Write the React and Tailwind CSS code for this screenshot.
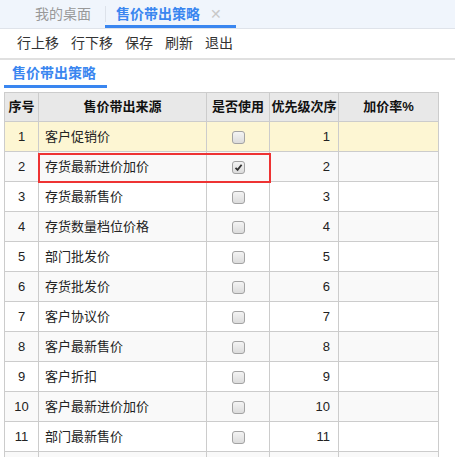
import React from 'react';

const rows = [
  { no: 1, name: '客户促销价', checked: false, order: 1 },
  { no: 2, name: '存货最新进价加价', checked: true, order: 2 },
  { no: 3, name: '存货最新售价', checked: false, order: 3 },
  { no: 4, name: '存货数量档位价格', checked: false, order: 4 },
  { no: 5, name: '部门批发价', checked: false, order: 5 },
  { no: 6, name: '存货批发价', checked: false, order: 6 },
  { no: 7, name: '客户协议价', checked: false, order: 7 },
  { no: 8, name: '客户最新售价', checked: false, order: 8 },
  { no: 9, name: '客户折扣', checked: false, order: 9 },
  { no: 10, name: '客户最新进价加价', checked: false, order: 10 },
  { no: 11, name: '部门最新售价', checked: false, order: 11 },
];

const CheckBox = ({ checked }) => (
  <span className="inline-flex items-center justify-center w-[13px] h-[13px] rounded-[3px] border border-[#a3a3a3] bg-gradient-to-b from-[#f4f4f4] to-[#dcdcdc] align-middle">
    {checked && (
      <svg width="9" height="9" viewBox="0 0 9 9">
        <path d="M1.5 4.8 L3.6 6.8 L7.6 1.8" fill="none" stroke="#333" strokeWidth="1.8" />
      </svg>
    )}
  </span>
);

const App = () => {
  return (
    <div className="w-[455px] h-[457px] overflow-hidden bg-white text-[#333]" style={{ fontFamily: '"Liberation Sans", "Noto Sans CJK SC", sans-serif' }}>
      {/* top tabs */}
      <div className="h-[29px] bg-[#f0f5fc] border-b border-[#dfe3ea] flex items-stretch">
        <div className="w-[105px] flex items-center pl-[35px] text-[14px] text-[#999]">我的桌面</div>
        <div className="relative flex items-center pl-[11px] pr-[14px] gap-[10px]">
          <span className="absolute left-0 top-[6px] h-[16px] w-px bg-[#dde2ea]" />
          <span className="text-[14px] font-bold text-[#3a86f0]">售价带出策略</span>
          <span className="text-[#c8c8c8] text-[14px] leading-none">✕</span>
          <span className="absolute left-0 right-0 bottom-[0px] h-[3px] bg-[#3a86f0]" />
        </div>
      </div>

      {/* toolbar */}
      <div className="h-[31px] border-b-2 border-[#e0e0e0] flex items-center gap-3 pl-[17px] text-[14px] text-[#333]">
        <span>行上移</span>
        <span>行下移</span>
        <span>保存</span>
        <span>刷新</span>
        <span>退出</span>
      </div>

      {/* sub tab */}
      <div className="h-[32px] pl-[4px] pt-[3px]">
        <div className="w-[103px] h-[25px] border-b-[3px] border-[#3a86f0] pl-[8px] text-[14px] font-bold text-[#3a86f0] leading-[20px]">
          售价带出策略
        </div>
      </div>

      {/* table */}
      <div className="pl-[4px]">
        <table className="table-fixed border-collapse w-[434px] text-[13px] text-[#222]">
          <colgroup>
            <col className="w-[34px]" />
            <col className="w-[168px]" />
            <col className="w-[63px]" />
            <col className="w-[69px]" />
            <col className="w-[100px]" />
          </colgroup>
          <thead>
            <tr className="bg-[#e8e8e8] h-[29px]">
              <th className="border border-[#cccccc] font-bold text-[#111]">序号</th>
              <th className="border border-[#cccccc] font-bold text-[#111]">售价带出来源</th>
              <th className="border border-[#cccccc] font-bold text-[#111] whitespace-nowrap">是否使用</th>
              <th className="border border-[#cccccc] font-bold text-[#111] whitespace-nowrap">优先级次序</th>
              <th className="border border-[#cccccc] font-bold text-[#111]">加价率%</th>
            </tr>
          </thead>
          <tbody>
            {rows.map((r) => (
              <tr
                key={r.no}
                className={r.no === 1 ? 'bg-[#fdf6d3] h-[30px]' : r.no % 2 === 0 ? 'bg-[#f9f9f9] h-[30px]' : 'bg-white h-[30px]'}
              >
                <td className="border border-[#cccccc] text-center">{r.no}</td>
                <td className="border border-[#cccccc] pl-[6px] relative">
                  {r.name}
                  {r.checked && (
                    <span className="absolute left-[-1px] top-[1px] w-[233px] h-[30px] border-2 border-[#ee3333] pointer-events-none" />
                  )}
                </td>
                <td className="border border-[#cccccc] text-center">
                  <CheckBox checked={r.checked} />
                </td>
                <td className="border border-[#cccccc] text-right pr-[8px]">{r.order}</td>
                <td className="border border-[#cccccc]"></td>
              </tr>
            ))}
            <tr className="bg-[#f9f9f9] h-[30px]">
              <td className="border border-[#cccccc]"></td>
              <td className="border border-[#cccccc]"></td>
              <td className="border border-[#cccccc]"></td>
              <td className="border border-[#cccccc]"></td>
              <td className="border border-[#cccccc]"></td>
            </tr>
          </tbody>
        </table>
      </div>
    </div>
  );
};

export default App;
